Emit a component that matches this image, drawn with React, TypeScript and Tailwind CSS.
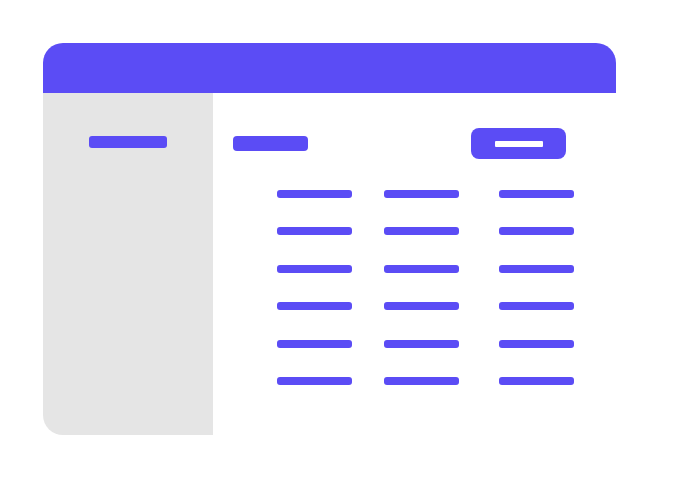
import React from "react";

const rows = [0, 1, 2, 3, 4, 5];

function Column({ className }: { className: string }) {
  return (
    <div className={`flex flex-col gap-[29.4px] ${className}`}>
      {rows.map((r) => (
        <div key={r} className="h-[8px] w-[75px] rounded-[3px] bg-[#5b4cf5]" />
      ))}
    </div>
  );
}

export default function App() {
  return (
    <div className="h-[483px] w-[675px] bg-white pl-[43px] pt-[43px]">
      <div className="w-[573px]">
        <div className="h-[50px] rounded-t-[20px] bg-[#5b4cf5]" />
        <div className="flex">
          <div className="h-[342px] w-[170px] rounded-bl-[20px] bg-[#e5e5e5] pl-[46px] pt-[43px]">
            <div className="h-[12px] w-[78px] rounded-[3px] bg-[#5b4cf5]" />
          </div>
          <div className="flex-1 bg-white">
            <div className="flex items-center justify-between pl-[20px] pr-[50px] pt-[35px]">
              <div className="h-[15px] w-[75px] rounded-[4px] bg-[#5b4cf5]" />
              <div className="flex h-[31px] w-[95px] items-center justify-center rounded-[8px] bg-[#5b4cf5]">
                <div className="h-[6px] w-[48px] rounded-[1px] bg-white" />
              </div>
            </div>
            <div className="mt-[31px] flex pl-[64px]">
              <Column className="" />
              <Column className="ml-[32px]" />
              <Column className="ml-[40px]" />
            </div>
          </div>
        </div>
      </div>
    </div>
  );
}
